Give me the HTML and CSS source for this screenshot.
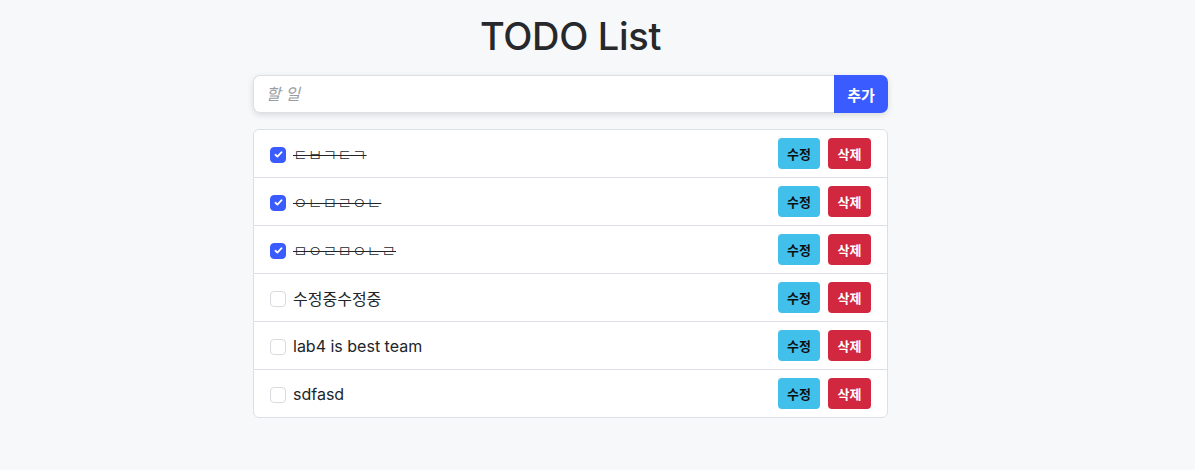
FILE: index.html
```html
<!DOCTYPE html>
<html lang="ko">
<head>
<meta charset="utf-8">
<title>TODO List</title>
<link rel="stylesheet" href="styles.css">
</head>
<body>
<main class="app">
  <h1 class="title">TODO List</h1>
  <form class="add-form">
    <input class="add-input" type="text" placeholder="할 일">
    <button class="add-btn" type="button">추가</button>
  </form>
  <ul class="todo-list">
    <li class="todo-item">
      <label class="todo-label">
        <span class="check checked"><svg viewBox="0 0 16 16" width="11" height="11"><path d="M3.5 8.4l2.9 2.7 6.1-6.4" fill="none" stroke="#fff" stroke-width="2.6" stroke-linecap="round" stroke-linejoin="round"/></svg></span>
        <span class="todo-text done">ㄷㅂㄱㄷㄱ</span>
      </label>
      <div class="actions"><button class="btn btn-edit" type="button">수정</button><button class="btn btn-del" type="button">삭제</button></div>
    </li>
    <li class="todo-item">
      <label class="todo-label">
        <span class="check checked"><svg viewBox="0 0 16 16" width="11" height="11"><path d="M3.5 8.4l2.9 2.7 6.1-6.4" fill="none" stroke="#fff" stroke-width="2.6" stroke-linecap="round" stroke-linejoin="round"/></svg></span>
        <span class="todo-text done">ㅇㄴㅁㄹㅇㄴ</span>
      </label>
      <div class="actions"><button class="btn btn-edit" type="button">수정</button><button class="btn btn-del" type="button">삭제</button></div>
    </li>
    <li class="todo-item">
      <label class="todo-label">
        <span class="check checked"><svg viewBox="0 0 16 16" width="11" height="11"><path d="M3.5 8.4l2.9 2.7 6.1-6.4" fill="none" stroke="#fff" stroke-width="2.6" stroke-linecap="round" stroke-linejoin="round"/></svg></span>
        <span class="todo-text done">ㅁㅇㄹㅁㅇㄴㄹ</span>
      </label>
      <div class="actions"><button class="btn btn-edit" type="button">수정</button><button class="btn btn-del" type="button">삭제</button></div>
    </li>
    <li class="todo-item">
      <label class="todo-label">
        <span class="check"></span>
        <span class="todo-text">수정중수정중</span>
      </label>
      <div class="actions"><button class="btn btn-edit" type="button">수정</button><button class="btn btn-del" type="button">삭제</button></div>
    </li>
    <li class="todo-item">
      <label class="todo-label">
        <span class="check"></span>
        <span class="todo-text">lab4 is best team</span>
      </label>
      <div class="actions"><button class="btn btn-edit" type="button">수정</button><button class="btn btn-del" type="button">삭제</button></div>
    </li>
    <li class="todo-item">
      <label class="todo-label">
        <span class="check"></span>
        <span class="todo-text">sdfasd</span>
      </label>
      <div class="actions"><button class="btn btn-edit" type="button">수정</button><button class="btn btn-del" type="button">삭제</button></div>
    </li>
  </ul>
</main>
</body>
</html>
```
FILE: styles.css
```css
* { box-sizing: border-box; }
body {
  margin: 0;
  background: #f7f8fa;
  color: #212529;
  font-family: Inter, "Noto Sans CJK KR", sans-serif;
  font-size: 16px;
}
.app {
  width: 635px;
  margin-left: 253px;
  padding-top: 12px;
}
.title {
  margin: 0 0 15px;
  text-align: center;
  font-size: 38px;
  font-weight: 500;
  line-height: 48px;
  letter-spacing: -0.3px;
  color: #26282b;
}
.add-form {
  display: flex;
  height: 38px;
  margin: 0 0 16px;
  border-radius: 7px;
  box-shadow: 0 2px 6px rgba(0,0,0,0.12);
}
.add-input {
  flex: 1;
  min-width: 0;
  border: 1px solid #dcdfe3;
  border-right: 0;
  border-radius: 7px 0 0 7px;
  padding: 0 12px;
  font: inherit;
  font-size: 16px;
  background: #fff;
  outline: none;
}
.add-input::placeholder {
  color: #9a9da2;
  font-style: italic;
}
.add-btn {
  width: 54px;
  border: 0;
  border-radius: 0 7px 7px 0;
  background: #3a5bff;
  color: #fff;
  font: inherit;
  font-size: 15px;
  font-weight: 600;
  padding: 0;
}
.todo-list {
  list-style: none;
  margin: 0;
  padding: 0;
  background: #fff;
  border: 1px solid #dcdfe3;
  border-radius: 6px;
}
.todo-item {
  display: flex;
  align-items: center;
  justify-content: space-between;
  height: 48px;
  padding: 0 16px;
  border-top: 1px solid #dcdfe3;
}
.todo-item:first-child { border-top: 0; height: 47px; }
.todo-label {
  display: flex;
  align-items: center;
  gap: 7px;
}
.check {
  width: 16px;
  height: 16px;
  border: 1px solid #d8dbdf;
  border-radius: 4px;
  background: #fff;
  display: flex;
  align-items: center;
  justify-content: center;
  margin-top: 2px;
}
.check.checked {
  background: #3a5bff;
  border-color: #3a5bff;
}
.todo-text {
  font-size: 16px;
  color: #212529;
}
.todo-text.done {
  text-decoration: line-through;
  font-weight: 300;
}
.actions {
  display: flex;
  gap: 8px;
}
.btn {
  height: 31px;
  min-width: 42px;
  padding: 0 8px;
  border: 0;
  border-radius: 4px;
  font-family: Inter, "Noto Sans CJK KR", sans-serif;
  font-size: 13px;
  font-weight: 600;
}
.btn-del { min-width: 43px; }
.btn-edit { background: #42c0ec; color: #111; }
.btn-del { background: #d1283f; color: #fff; }
```
